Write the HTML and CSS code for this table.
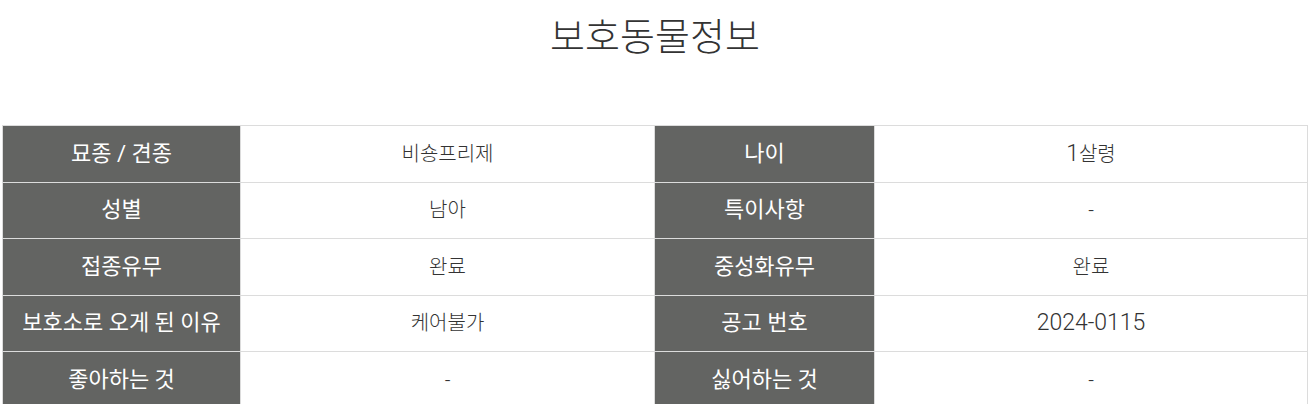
FILE: index.html
```html
<!DOCTYPE html>
<html lang="ko">
<head>
<meta charset="utf-8">
<title>보호동물정보</title>
<link rel="stylesheet" href="styles.css">
</head>
<body>
<div class="page">
  <h1 class="title">보호동물정보</h1>
  <table class="info">
    <colgroup>
      <col class="c1"><col class="c2"><col class="c3"><col class="c4">
    </colgroup>
    <tbody>
      <tr><th>묘종 / 견종</th><td>비숑프리제</td><th>나이</th><td><span class="num">1</span>살령</td></tr>
      <tr><th>성별</th><td>남아</td><th>특이사항</th><td>-</td></tr>
      <tr><th>접종유무</th><td>완료</td><th>중성화유무</th><td>완료</td></tr>
      <tr><th>보호소로 오게 된 이유</th><td>케어불가</td><th>공고 번호</th><td><span class="num">2024-0115</span></td></tr>
      <tr><th>좋아하는 것</th><td>-</td><th>싫어하는 것</th><td>-</td></tr>
    </tbody>
  </table>
</div>
</body>
</html>
```

FILE: styles.css
```css
html, body {
  margin: 0;
  padding: 0;
  background: #fff;
}
body {
  font-family: Roboto, "Noto Sans CJK KR", sans-serif;
  color: #333;
}
.page {
  padding: 0 2px;
}
.title {
  margin: 0;
  padding-top: 12px;
  height: 125px;
  box-sizing: border-box;
  text-align: center;
  font-size: 38px;
  font-weight: 300;
  line-height: 50px;
  color: #333;
}
.info {
  width: 1305px;
  border-collapse: collapse;
  table-layout: fixed;
}
.c1 { width: 238px; }
.c2 { width: 414px; }
.c3 { width: 220px; }
.c4 { width: 433px; }
.info th,
.info td {
  height: 55.5px;
  padding: 0;
  border: 1px solid #dcdcdc;
  text-align: center;
  vertical-align: middle;
  line-height: 28px;
}
.info th {
  background: #636462;
  color: #fff;
  font-weight: 400;
  font-size: 22px;
}
.info td {
  color: #333;
  font-size: 20px;
  font-weight: 300;
}
.num {
  font-size: 23px;
  font-weight: 300;
  color: #333;
}
```
